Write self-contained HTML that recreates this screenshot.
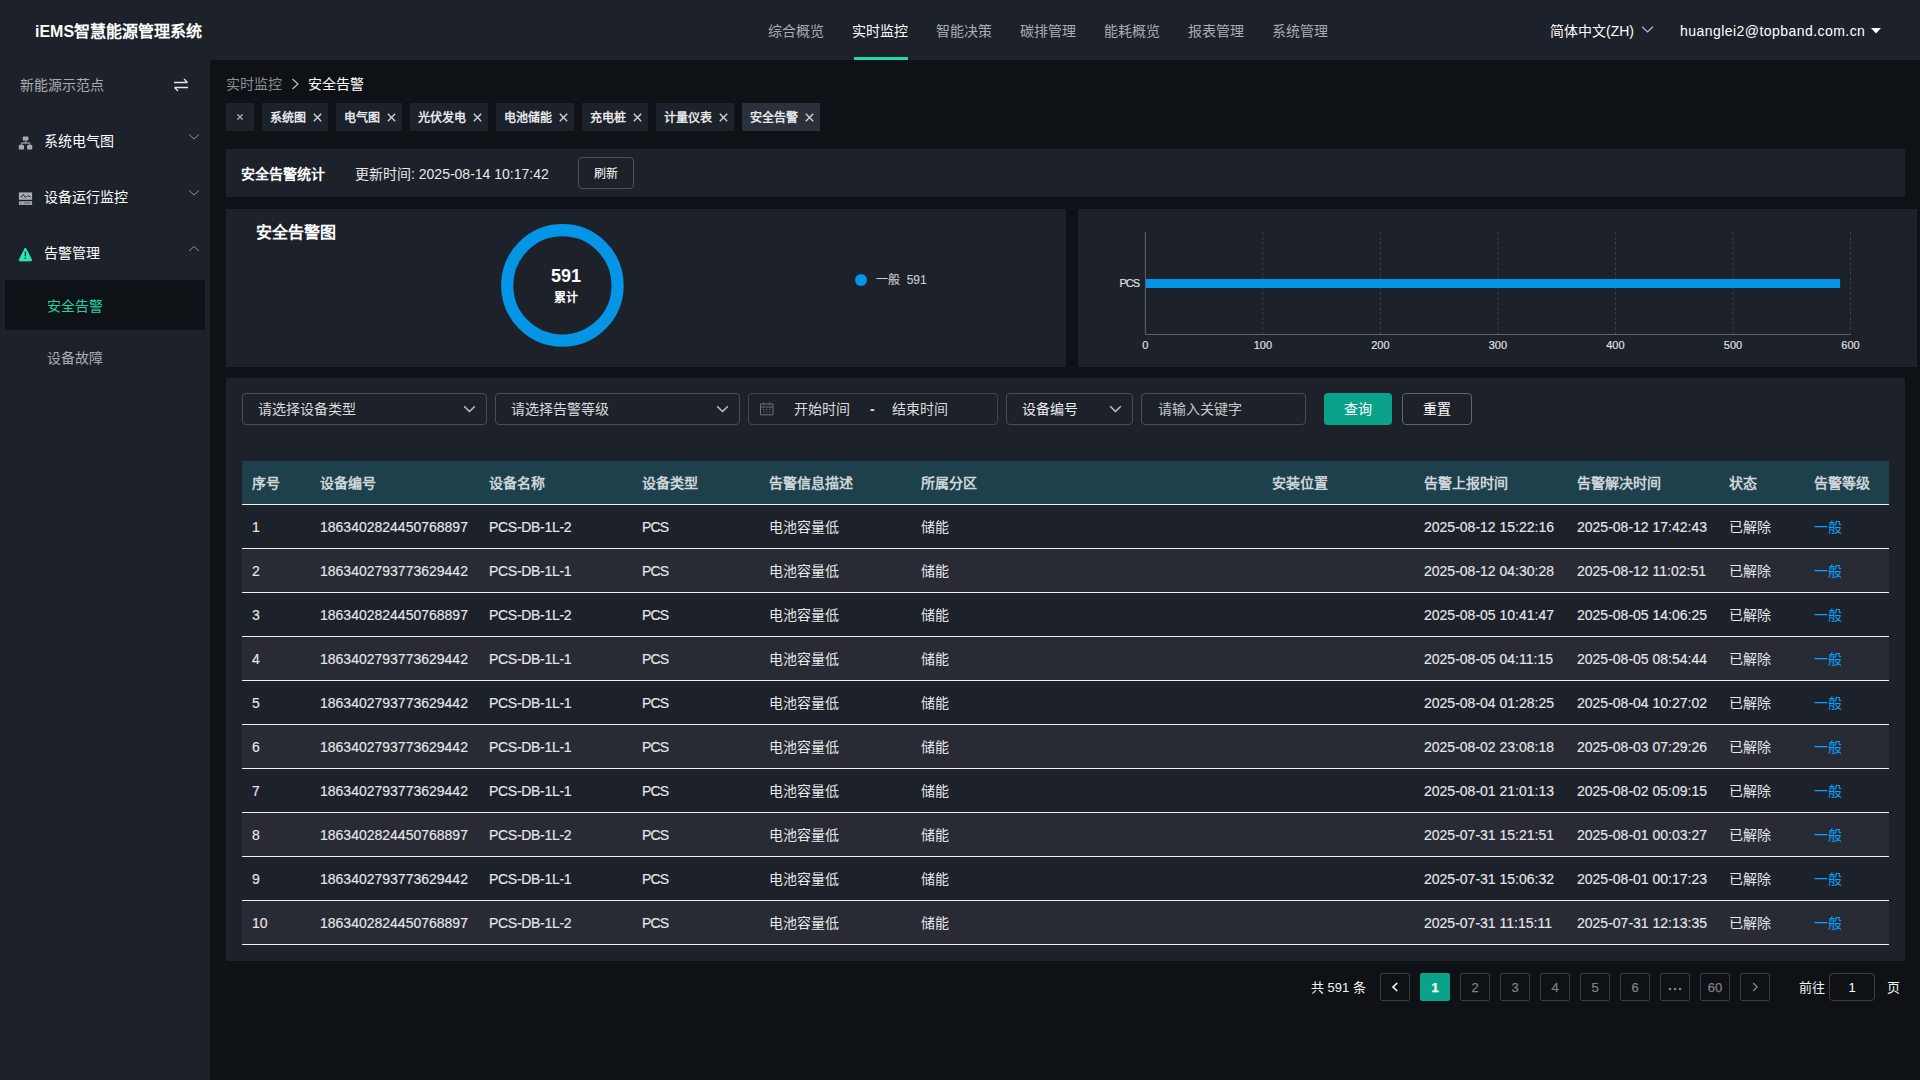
<!DOCTYPE html>
<html lang="zh-CN">
<head>
<meta charset="utf-8">
<title>iEMS智慧能源管理系统</title>
<style>
*{box-sizing:border-box;margin:0;padding:0}
html,body{width:1920px;height:1080px;overflow:hidden;background:#0e1116;color:#fff;font-family:"Liberation Sans",sans-serif;font-size:14px;font-weight:500}
.abs{position:absolute}
#hdr{position:absolute;left:0;top:0;width:1920px;height:60px;background:#1d2129}
#logo{position:absolute;left:35px;top:20px;font-size:16px;font-weight:bold;line-height:24px;color:#fff;white-space:nowrap}
.nav{position:absolute;top:19px;height:24px;line-height:24px;font-size:14px;font-weight:500;color:#a9acb1;white-space:nowrap;margin-left:-1px}
.nav.on{color:#fff}
#navline{position:absolute;left:854px;top:57px;width:54px;height:3px;background:#25d9a6}
#side{position:absolute;left:0;top:60px;width:210px;height:1020px;background:#1d2129}
.t{position:absolute;white-space:nowrap;line-height:20px}
.mi{font-weight:500;color:#fff}

.card{position:absolute;background:#1d2129}
.tab{position:absolute;top:103px;height:28px;background:#1d2129;color:#e6e7e9;font-size:12px;font-weight:bold;line-height:30px;padding-left:8px;white-space:nowrap}
.tab svg{position:absolute;right:6px;top:10px}
.tab.on{background:#2b303a}
.ct{position:absolute;white-space:nowrap;font-size:11px;line-height:12px;color:#e2e3e5;-webkit-text-stroke-width:.15px}

.inp{position:absolute;top:393px;height:32px;border:1px solid #4a4d54;border-radius:4px;line-height:31px;font-size:14px;font-weight:normal;color:#d9dadc;white-space:nowrap}
.inp svg.cv{position:absolute;top:11px}
#tb{position:absolute;left:242px;top:461px;width:1647px;border-collapse:separate;border-spacing:0;table-layout:fixed}
#tb th{height:44px;line-height:20px;background:#1e404d;color:#cdd5d9;font-weight:bold;text-align:left;padding:0 0 0 10px;border-bottom:1px solid #f2f2f2;font-size:14px;white-space:nowrap}
#tb td{height:44px;line-height:20px;color:#e6e7e9;text-align:left;padding:0 0 0 10px;border-bottom:1px solid #f2f2f2;font-size:14px;white-space:nowrap;background:#1d2129}
#tb tr:nth-child(even) td{background:#282b34}
#tb td.lv{color:#05a1ff}
#tb td:nth-child(1),#tb td:nth-child(2),#tb td:nth-child(3),#tb td:nth-child(4),#tb td:nth-child(8),#tb td:nth-child(9){-webkit-text-stroke:.15px #e6e7e9}
#tb td:nth-child(3){letter-spacing:-.3px}
#tb td:nth-child(4){letter-spacing:-.9px}
.pg{position:absolute;top:973px;width:30px;height:28px;border:1px solid #3a3d44;border-radius:2px;text-align:center;line-height:28px;font-size:13px;font-weight:500;color:#7d8087;-webkit-text-stroke-width:.25px}
.pg.on{background:#0ba28a;border-color:#0ba28a;color:#fff;font-weight:bold}
</style>
</head>
<body>
<div id="hdr">
  <div id="logo">iEMS智慧能源管理系统</div>
  <div class="nav" style="left:769px">综合概览</div>
  <div class="nav on" style="left:853px">实时监控</div>
  <div class="nav" style="left:937px">智能决策</div>
  <div class="nav" style="left:1021px">碳排管理</div>
  <div class="nav" style="left:1105px">能耗概览</div>
  <div class="nav" style="left:1189px">报表管理</div>
  <div class="nav" style="left:1273px">系统管理</div>
  <div id="navline"></div>
  <div class="nav" style="left:1551px;color:#fff;font-weight:normal">简体中文(ZH)</div>
  <svg class="abs" style="left:1641px;top:25px" width="13" height="10" viewBox="0 0 13 10"><path d="M1.2 1.8 L6.5 7 L11.8 1.8" fill="none" stroke="#b8bbc0" stroke-width="1.2"/></svg>
  <div class="nav" style="left:1681px;color:#fff;font-weight:normal;letter-spacing:.45px">huanglei2@topband.com.cn</div>
  <svg class="abs" style="left:1870px;top:27px" width="12" height="8" viewBox="0 0 12 8"><path d="M1 1 L11 1 L6 6.5 Z" fill="#fff"/></svg>
</div>
<div id="side">
  <div class="t" style="left:20px;top:15px;color:#a9acb1">新能源示范点</div>
  <svg class="abs" style="left:173px;top:18px" width="16" height="14" viewBox="0 0 16 14"><path d="M1 4.5 H14.5 M11 1 L14.5 4.5 M15 9.5 H1.5 M5 13 L1.5 9.5" fill="none" stroke="#e6e7e9" stroke-width="1.3"/></svg>

  <svg class="abs" style="left:18px;top:75px" width="16" height="16" viewBox="0 0 16 16"><g fill="#a9abb0"><rect x="4.8" y="1.5" width="5.6" height="4" rx=".6"/><rect x=".8" y="10.1" width="5.2" height="4.3" rx=".6"/><rect x="9.1" y="10.1" width="5.2" height="4.3" rx=".6"/></g><path d="M7.6 5.5 V8.1 M3.4 10.2 V8.9 Q3.4 8.1 4.2 8.1 H11 Q11.8 8.1 11.8 8.9 V10.2" fill="none" stroke="#8f9197" stroke-width="1.5"/></svg>
  <div class="t mi" style="left:44px;top:71px">系统电气图</div>
  <svg class="abs" style="left:188px;top:73px" width="12" height="8" viewBox="0 0 12 8"><path d="M1 1.5 L6 6 L11 1.5" fill="none" stroke="#8d9096" stroke-width="1"/></svg>

  <svg class="abs" style="left:18px;top:131px" width="16" height="16" viewBox="0 0 16 16"><rect x=".9" y="1.4" width="13.2" height="7.4" fill="#a9abb0"/><rect x=".9" y="10.2" width="13.2" height="3.7" fill="#a9abb0"/><path d="M2.6 5.8 L4 5.6 L5.4 3.4 L7.4 6.8 L9.4 4.8 L12.6 5.8" fill="none" stroke="#2b2f37" stroke-width="1"/><path d="M2.2 12 H3.6 M5.6 12 H12.6" fill="none" stroke="#5a5e66" stroke-width="1.1"/></svg>
  <div class="t mi" style="left:44px;top:127px">设备运行监控</div>
  <svg class="abs" style="left:188px;top:129px" width="12" height="8" viewBox="0 0 12 8"><path d="M1 1.5 L6 6 L11 1.5" fill="none" stroke="#8d9096" stroke-width="1"/></svg>

  <svg class="abs" style="left:18px;top:185.5px" width="16" height="16" viewBox="0 0 16 16"><defs><linearGradient id="wg" x1="0" y1="0" x2="0" y2="1"><stop offset="0" stop-color="#30f0dc"/><stop offset="1" stop-color="#2ee2a2"/></linearGradient></defs><path d="M7.4 2 L1.2 13.6 Q.8 14.9 2.2 14.9 H12.6 Q14 14.9 13.6 13.6 Z" fill="url(#wg)" stroke="url(#wg)" stroke-width="1" stroke-linejoin="round"/><path d="M7.4 5.6 V10.2 M7.4 11.6 V13" stroke="#1d2129" stroke-width="1.3" fill="none"/></svg>
  <div class="t mi" style="left:44px;top:183px">告警管理</div>
  <svg class="abs" style="left:188px;top:185px" width="12" height="8" viewBox="0 0 12 8"><path d="M1 6 L6 1.5 L11 6" fill="none" stroke="#8d9096" stroke-width="1"/></svg>

  <div class="abs" style="left:5px;top:220px;width:200px;height:50px;background:#0e1116"></div>
  <div class="t" style="left:47px;top:236px;color:#1fd3a6;font-weight:500">安全告警</div>
  <div class="t" style="left:47px;top:288px;color:#a9acb1">设备故障</div>
</div>

<div id="main">
  <div class="t" style="left:226px;top:74px;color:#8b8e94">实时监控</div>
  <svg class="abs" style="left:290px;top:78px" width="10" height="12" viewBox="0 0 10 12"><path d="M2.5 1 L8 6 L2.5 11" fill="none" stroke="#c6c8cc" stroke-width="1.1"/></svg>
  <div class="t" style="left:308px;top:74px;color:#fff">安全告警</div>
<div class="tab" style="left:226px;width:28px;padding:0"><svg style="left:11px;top:11px;right:auto" width="6" height="6" viewBox="0 0 6 6"><path d="M.4 .4 L5.6 5.6 M5.6 .4 L.4 5.6" stroke="#a9acb1" stroke-width="1.3" fill="none"/></svg></div>
<div class="tab" style="left:262px;width:66px">系统图<svg width="9" height="9" viewBox="0 0 9 9"><path d="M.8 .8 L8.2 8.2 M8.2 .8 L.8 8.2" stroke="#d4d6d9" stroke-width="1.3" fill="none"/></svg></div>
<div class="tab" style="left:336px;width:66px">电气图<svg width="9" height="9" viewBox="0 0 9 9"><path d="M.8 .8 L8.2 8.2 M8.2 .8 L.8 8.2" stroke="#d4d6d9" stroke-width="1.3" fill="none"/></svg></div>
<div class="tab" style="left:410px;width:78px">光伏发电<svg width="9" height="9" viewBox="0 0 9 9"><path d="M.8 .8 L8.2 8.2 M8.2 .8 L.8 8.2" stroke="#d4d6d9" stroke-width="1.3" fill="none"/></svg></div>
<div class="tab" style="left:496px;width:78px">电池储能<svg width="9" height="9" viewBox="0 0 9 9"><path d="M.8 .8 L8.2 8.2 M8.2 .8 L.8 8.2" stroke="#d4d6d9" stroke-width="1.3" fill="none"/></svg></div>
<div class="tab" style="left:582px;width:66px">充电桩<svg width="9" height="9" viewBox="0 0 9 9"><path d="M.8 .8 L8.2 8.2 M8.2 .8 L.8 8.2" stroke="#d4d6d9" stroke-width="1.3" fill="none"/></svg></div>
<div class="tab" style="left:656px;width:78px">计量仪表<svg width="9" height="9" viewBox="0 0 9 9"><path d="M.8 .8 L8.2 8.2 M8.2 .8 L.8 8.2" stroke="#d4d6d9" stroke-width="1.3" fill="none"/></svg></div>
<div class="tab on" style="left:742px;width:78px">安全告警<svg width="9" height="9" viewBox="0 0 9 9"><path d="M.8 .8 L8.2 8.2 M8.2 .8 L.8 8.2" stroke="#d4d6d9" stroke-width="1.3" fill="none"/></svg></div>

  <div class="card" style="left:226px;top:149px;width:1679px;height:48px"></div>
  <div class="t" style="left:241px;top:164px;font-weight:bold;color:#fff">安全告警统计</div>
  <div class="t" style="left:355px;top:164px;color:#e6e7e9">更新时间: 2025-08-14 10:17:42</div>
  <div class="abs" style="left:578px;top:157px;width:56px;height:32px;border:1px solid #4e5158;border-radius:4px;text-align:center;line-height:33px;font-size:12px;font-weight:500;color:#fff">刷新</div>

  <div class="card" style="left:226px;top:209px;width:840px;height:158px"></div>
  <div class="t" style="left:256.4px;top:221px;font-size:16px;line-height:24px;font-weight:bold;color:#fff">安全告警图</div>
  <svg class="abs" style="left:496px;top:219px" width="134" height="134" viewBox="0 0 134 134"><circle cx="66.4" cy="66.4" r="55.2" fill="none" stroke="#0595e6" stroke-width="12.2"/></svg>
  <div class="abs" style="left:526px;top:264px;width:80px;text-align:center;font-size:18px;line-height:24px;font-weight:bold;color:#fff">591</div>
  <div class="abs" style="left:526px;top:290px;width:80px;text-align:center;font-size:12px;line-height:16px;font-weight:bold;color:#fff">累计</div>
  <div class="abs" style="left:855px;top:274px;width:12px;height:12px;border-radius:6px;background:#0595e6"></div>
  <div class="ct" style="left:876px;top:272px;font-size:12px;line-height:16px;color:#c9cbce">一般&nbsp; 591</div>

  <div class="card" style="left:1078px;top:209px;width:839px;height:158px"></div>
  <svg class="abs" style="left:1078px;top:209px" width="839" height="158" viewBox="0 0 839 158"><line x1="184.88" y1="23" x2="184.88" y2="125.5" stroke="#3a3e46" stroke-width="1" stroke-dasharray="3 2"/><line x1="302.40" y1="23" x2="302.40" y2="125.5" stroke="#3a3e46" stroke-width="1" stroke-dasharray="3 2"/><line x1="419.92" y1="23" x2="419.92" y2="125.5" stroke="#3a3e46" stroke-width="1" stroke-dasharray="3 2"/><line x1="537.45" y1="23" x2="537.45" y2="125.5" stroke="#3a3e46" stroke-width="1" stroke-dasharray="3 2"/><line x1="654.97" y1="23" x2="654.97" y2="125.5" stroke="#3a3e46" stroke-width="1" stroke-dasharray="3 2"/><line x1="772.50" y1="23" x2="772.50" y2="125.5" stroke="#3a3e46" stroke-width="1" stroke-dasharray="3 2"/>
    <rect x="67.5" y="70" width="694.6" height="9" fill="#0595e6"/>
    <path d="M67.35 23 V125.5 H772.5" fill="none" stroke="#5f6269" stroke-width="1"/>
  </svg>
  <div class="ct" style="left:1100px;top:277px;width:39px;text-align:right;letter-spacing:-1px">PCS</div>
<div class="ct" style="left:1115.3px;top:339px;width:60px;text-align:center">0</div>
<div class="ct" style="left:1232.9px;top:339px;width:60px;text-align:center">100</div>
<div class="ct" style="left:1350.4px;top:339px;width:60px;text-align:center">200</div>
<div class="ct" style="left:1467.9px;top:339px;width:60px;text-align:center">300</div>
<div class="ct" style="left:1585.4px;top:339px;width:60px;text-align:center">400</div>
<div class="ct" style="left:1703.0px;top:339px;width:60px;text-align:center">500</div>
<div class="ct" style="left:1820.5px;top:339px;width:60px;text-align:center">600</div>

  <div class="card" style="left:226px;top:378px;width:1679px;height:583px"></div>
  <div class="inp" style="left:242px;width:245px;padding-left:15px">请选择设备类型<svg class="cv" style="left:220px" width="13" height="8" viewBox="0 0 13 8"><path d="M1.2 1.2 L6.5 6.4 L11.8 1.2" fill="none" stroke="#c4c6ca" stroke-width="1.4"/></svg></div>
  <div class="inp" style="left:495px;width:245px;padding-left:15px">请选择告警等级<svg class="cv" style="left:220px" width="13" height="8" viewBox="0 0 13 8"><path d="M1.2 1.2 L6.5 6.4 L11.8 1.2" fill="none" stroke="#c4c6ca" stroke-width="1.4"/></svg></div>
  <div class="inp" style="left:748px;width:250px;border-color:#42454c">
    <svg class="abs" style="left:11px;top:8px" width="14" height="14" viewBox="0 0 14 14"><path d="M.5 2 H13 V12.8 H.5 Z M.5 5 H13 M3.6 .3 V2.6 M9.9 .3 V2.6" fill="none" stroke="#6c6f76" stroke-width="1"/><path d="M3 7.5 H10.5 M3 10 H10.5" fill="none" stroke="#5f6269" stroke-width="1" stroke-dasharray="1.5 1.5"/></svg>
    <span class="abs" style="left:45px;top:0">开始时间</span><span class="abs" style="left:121px;top:0;font-weight:bold">-</span><span class="abs" style="left:143px;top:0">结束时间</span>
  </div>
  <div class="inp" style="left:1006px;width:127px;padding-left:15px;color:#e9eaeb">设备编号<svg class="cv" style="left:102px" width="13" height="8" viewBox="0 0 13 8"><path d="M1.2 1.2 L6.5 6.4 L11.8 1.2" fill="none" stroke="#c4c6ca" stroke-width="1.4"/></svg></div>
  <div class="inp" style="left:1141px;width:165px;padding-left:16px;color:#c6c8cb">请输入关键字</div>
  <div class="abs" style="left:1324px;top:393px;width:68px;height:32px;border-radius:4px;background:#0ba28a;color:#fff;font-weight:500;text-align:center;line-height:33px">查询</div>
  <div class="abs" style="left:1402px;top:393px;width:70px;height:32px;border-radius:4px;border:1px solid #62656c;color:#fff;font-weight:500;text-align:center;line-height:31px">重置</div>
<table id="tb"><colgroup><col style="width:68px"><col style="width:169px"><col style="width:153px"><col style="width:127px"><col style="width:152px"><col style="width:351px"><col style="width:152px"><col style="width:153px"><col style="width:152px"><col style="width:85px"><col style="width:85px"></colgroup>
<thead><tr><th>序号</th><th>设备编号</th><th>设备名称</th><th>设备类型</th><th>告警信息描述</th><th>所属分区</th><th>安装位置</th><th>告警上报时间</th><th>告警解决时间</th><th>状态</th><th>告警等级</th></tr></thead>
<tbody>
<tr><td>1</td><td>1863402824450768897</td><td>PCS-DB-1L-2</td><td>PCS</td><td>电池容量低</td><td>储能</td><td></td><td>2025-08-12 15:22:16</td><td>2025-08-12 17:42:43</td><td>已解除</td><td class="lv">一般</td></tr>
<tr><td>2</td><td>1863402793773629442</td><td>PCS-DB-1L-1</td><td>PCS</td><td>电池容量低</td><td>储能</td><td></td><td>2025-08-12 04:30:28</td><td>2025-08-12 11:02:51</td><td>已解除</td><td class="lv">一般</td></tr>
<tr><td>3</td><td>1863402824450768897</td><td>PCS-DB-1L-2</td><td>PCS</td><td>电池容量低</td><td>储能</td><td></td><td>2025-08-05 10:41:47</td><td>2025-08-05 14:06:25</td><td>已解除</td><td class="lv">一般</td></tr>
<tr><td>4</td><td>1863402793773629442</td><td>PCS-DB-1L-1</td><td>PCS</td><td>电池容量低</td><td>储能</td><td></td><td>2025-08-05 04:11:15</td><td>2025-08-05 08:54:44</td><td>已解除</td><td class="lv">一般</td></tr>
<tr><td>5</td><td>1863402793773629442</td><td>PCS-DB-1L-1</td><td>PCS</td><td>电池容量低</td><td>储能</td><td></td><td>2025-08-04 01:28:25</td><td>2025-08-04 10:27:02</td><td>已解除</td><td class="lv">一般</td></tr>
<tr><td>6</td><td>1863402793773629442</td><td>PCS-DB-1L-1</td><td>PCS</td><td>电池容量低</td><td>储能</td><td></td><td>2025-08-02 23:08:18</td><td>2025-08-03 07:29:26</td><td>已解除</td><td class="lv">一般</td></tr>
<tr><td>7</td><td>1863402793773629442</td><td>PCS-DB-1L-1</td><td>PCS</td><td>电池容量低</td><td>储能</td><td></td><td>2025-08-01 21:01:13</td><td>2025-08-02 05:09:15</td><td>已解除</td><td class="lv">一般</td></tr>
<tr><td>8</td><td>1863402824450768897</td><td>PCS-DB-1L-2</td><td>PCS</td><td>电池容量低</td><td>储能</td><td></td><td>2025-07-31 15:21:51</td><td>2025-08-01 00:03:27</td><td>已解除</td><td class="lv">一般</td></tr>
<tr><td>9</td><td>1863402793773629442</td><td>PCS-DB-1L-1</td><td>PCS</td><td>电池容量低</td><td>储能</td><td></td><td>2025-07-31 15:06:32</td><td>2025-08-01 00:17:23</td><td>已解除</td><td class="lv">一般</td></tr>
<tr><td>10</td><td>1863402824450768897</td><td>PCS-DB-1L-2</td><td>PCS</td><td>电池容量低</td><td>储能</td><td></td><td>2025-07-31 11:15:11</td><td>2025-07-31 12:13:35</td><td>已解除</td><td class="lv">一般</td></tr>
</tbody></table>
  <div class="t" style="left:1311px;top:978px;font-size:13px;font-weight:500;color:#f2f3f4">共 591 条</div>
  <div class="pg" style="left:1380px"><svg class="abs" style="left:9px;top:7px" width="10" height="12" viewBox="0 0 10 12"><path d="M7.2 2 L3 6 L7.2 10" fill="none" stroke="#fff" stroke-width="1.6"/></svg></div>
<div class="pg on" style="left:1420px">1</div>
<div class="pg" style="left:1460px">2</div>
<div class="pg" style="left:1500px">3</div>
<div class="pg" style="left:1540px">4</div>
<div class="pg" style="left:1580px">5</div>
<div class="pg" style="left:1620px">6</div>
<div class="pg" style="left:1660px"><svg class="abs" style="left:7px;top:13px" width="14" height="4" viewBox="0 0 14 4"><circle cx="2" cy="2" r="1.3" fill="#7d8087"/><circle cx="7" cy="2" r="1.3" fill="#7d8087"/><circle cx="12" cy="2" r="1.3" fill="#7d8087"/></svg></div>
<div class="pg" style="left:1700px">60</div>

  <div class="pg" style="left:1740px"><svg class="abs" style="left:9px;top:7px" width="10" height="12" viewBox="0 0 10 12"><path d="M3.2 2 L7.2 6 L3.2 10" fill="none" stroke="#8a8d94" stroke-width="1.1"/></svg></div>
  <div class="t" style="left:1799px;top:978px;font-size:13px;font-weight:500;color:#f2f3f4">前往</div>
  <div class="abs" style="left:1829px;top:973px;width:46px;height:28px;border:1px solid #3a3d44;border-radius:4px;text-align:center;line-height:28px;font-size:13px;font-weight:500;color:#fff">1</div>
  <div class="t" style="left:1887px;top:978px;font-size:13px;font-weight:500;color:#f2f3f4">页</div>
</div>
</body>
</html>
